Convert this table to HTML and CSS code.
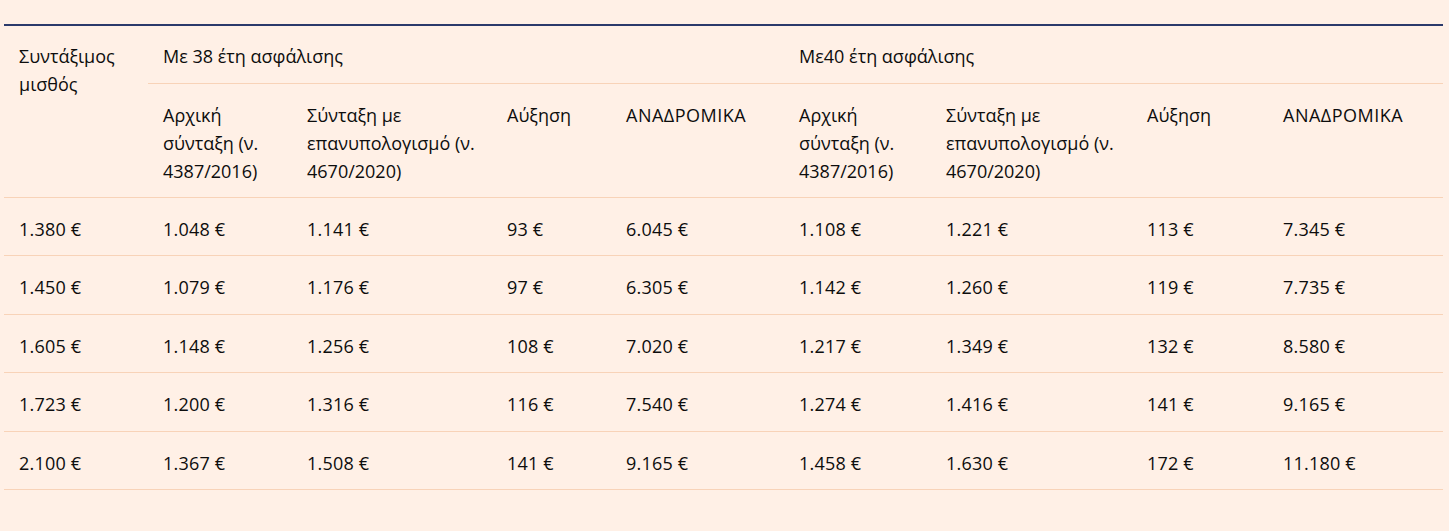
FILE: index.html
```html
<!DOCTYPE html>
<html lang="el">
<head>
<meta charset="utf-8">
<link rel="stylesheet" href="styles.css">
</head>
<body>
<div class="wrap">
<table class="pension">
<colgroup>
<col class="c1"><col class="c2"><col class="c3"><col class="c4"><col class="c5">
<col class="c6"><col class="c7"><col class="c8"><col class="c9">
</colgroup>
<thead>
<tr class="group">
<th rowspan="2" class="first">Συντάξιμος μισθός</th>
<th colspan="4">Με 38 έτη ασφάλισης</th>
<th colspan="4">Με40 έτη ασφάλισης</th>
</tr>
<tr class="sub">
<th>Αρχική σύνταξη (ν. 4387/2016)</th>
<th>Σύνταξη με επανυπολογισμό (ν. 4670/2020)</th>
<th>Αύξηση</th>
<th class="caps">ΑΝΑΔΡΟΜΙΚΑ</th>
<th>Αρχική σύνταξη (ν. 4387/2016)</th>
<th>Σύνταξη με επανυπολογισμό (ν. 4670/2020)</th>
<th>Αύξηση</th>
<th class="caps">ΑΝΑΔΡΟΜΙΚΑ</th>
</tr>
</thead>
<tbody>
<tr><td>1.380 €</td><td>1.048 €</td><td>1.141 €</td><td>93 €</td><td>6.045 €</td><td>1.108 €</td><td>1.221 €</td><td>113 €</td><td>7.345 €</td></tr>
<tr><td>1.450 €</td><td>1.079 €</td><td>1.176 €</td><td>97 €</td><td>6.305 €</td><td>1.142 €</td><td>1.260 €</td><td>119 €</td><td>7.735 €</td></tr>
<tr><td>1.605 €</td><td>1.148 €</td><td>1.256 €</td><td>108 €</td><td>7.020 €</td><td>1.217 €</td><td>1.349 €</td><td>132 €</td><td>8.580 €</td></tr>
<tr><td>1.723 €</td><td>1.200 €</td><td>1.316 €</td><td>116 €</td><td>7.540 €</td><td>1.274 €</td><td>1.416 €</td><td>141 €</td><td>9.165 €</td></tr>
<tr><td>2.100 €</td><td>1.367 €</td><td>1.508 €</td><td>141 €</td><td>9.165 €</td><td>1.458 €</td><td>1.630 €</td><td>172 €</td><td>11.180 €</td></tr>
</tbody>
</table>
</div>
</body>
</html>
```
FILE: styles.css
```css
html, body {
  margin: 0;
  padding: 0;
  background: #fff0e6;
}
body {
  font-family: "Open Sans", "Noto Sans", sans-serif;
  font-size: 18px;
  color: #0d0d0d;
}
.wrap {
  padding: 24px 6px 0 4px;
}
.pension {
  width: 1439px;
  table-layout: fixed;
  border-collapse: collapse;
  border-top: 2px solid #2b3a6b;
}
.c1 { width: 144px; }
.c2 { width: 144px; }
.c3 { width: 200px; }
.c4 { width: 119px; }
.c5 { width: 173px; }
.c6 { width: 147px; }
.c7 { width: 201px; }
.c8 { width: 136px; }
.c9 { width: 175px; }
.pension th,
.pension td {
  text-align: left;
  vertical-align: top;
  font-weight: normal;
  line-height: 28px;
  padding: 15px 6px 14px 15px;
  border-bottom: 1px solid #f8d3b8;
}
.pension .group th {
  padding-top: 16px;
  padding-bottom: 13px;
}
.pension .sub th {
  padding-top: 17px;
  padding-bottom: 12px;
}
.pension .sub th.caps {
  letter-spacing: 0.5px;
}
.pension td {
  padding-top: 17px;
  padding-bottom: 12.4px;
  letter-spacing: 0.2px;
}
```
